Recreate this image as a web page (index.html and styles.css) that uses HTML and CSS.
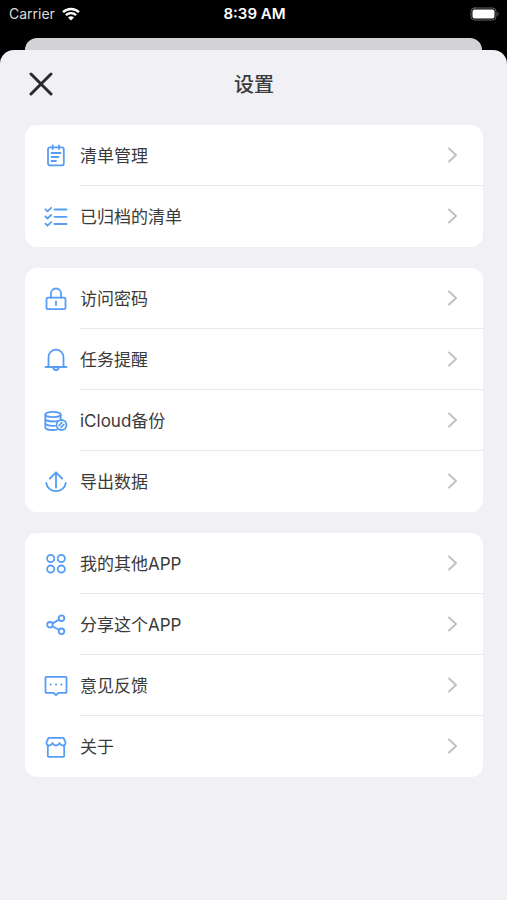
FILE: index.html
```html
<!DOCTYPE html>
<html lang="zh-CN">
<head>
    <meta charset="UTF-8">
    <meta name="viewport" content="width=device-width, initial-scale=1.0">
    <title>设置</title>
    <link rel="stylesheet" href="styles.css">
</head>
<body>
    <!-- 状态栏 -->
    <div class="status-bar">
        <div class="carrier">
            <span>Carrier</span>
            <svg class="wifi" viewBox="0 0 18 14" aria-hidden="true">
                <path d="M1 5.2a11.5 11.5 0 0 1 16 0M3.9 8.2a7.3 7.3 0 0 1 10.2 0"/>
                <path class="dot" d="M9 13.5L6 10.6a4.3 4.3 0 0 1 6 0z"/>
            </svg>
        </div>
        <span class="time">8:39 AM</span>
        <div class="battery-box">
            <svg class="battery" viewBox="0 0 30 15" aria-hidden="true">
                <rect class="shell" x="1" y="1" width="25" height="12" rx="3.5"/>
                <rect class="level" x="2.5" y="2.5" width="22" height="9" rx="2"/>
                <path class="tip" d="M27.5 5v4c1.600-.5 1.600-3.500 0-4z"/>
            </svg>
        </div>
    </div>

    <div class="back-sheet"></div>

    <main class="sheet">
        <header class="header">
            <button class="close" type="button" aria-label="关闭">
                <svg viewBox="0 0 24 24" aria-hidden="true"><path d="M2 2l20 20M22 2L2 22"/></svg>
            </button>
            <h1>设置</h1>
        </header>

        <!-- 清单 -->
        <nav class="card">
            <a class="row" href="#lists">
                <svg class="icon" viewBox="0 0 24 24" aria-hidden="true">
                    <rect x="4" y="3.4" width="15.8" height="18" rx="2"/>
                    <path d="M8.700 1.500v3.500M15 1.500v3.500M7.500 9h9M7.500 13h7M7.500 17h4.500"/>
                </svg>
                <span class="label">清单管理</span>
                <svg class="arrow" viewBox="0 0 10 16" aria-hidden="true"><path d="M1 1.500L8 8l-7 6.500"/></svg>
            </a>
            <a class="row" href="#archived">
                <svg class="icon" viewBox="0 0 24 24" aria-hidden="true">
                    <path d="M10.500 4.500h12M10.500 11.800h12M10.500 19h12M1.500 4.300l2 2 3.700-3.500M1.500 11.500l2 2L7.200 10M1.500 18.700l2 2 3.700-3.500"/>
                </svg>
                <span class="label">已归档的清单</span>
                <svg class="arrow" viewBox="0 0 10 16" aria-hidden="true"><path d="M1 1.500L8 8l-7 6.500"/></svg>
            </a>
        </nav>

        <!-- 数据与提醒 -->
        <nav class="card">
            <a class="row" href="#passcode">
                <svg class="icon" viewBox="0 0 24 24" aria-hidden="true">
                    <rect x="2.500" y="10.700" width="19" height="11.500" rx="1.500"/>
                    <path d="M7 10.700V6.500a5 5 0 0 1 10 0v4.200M12 14.500v3.500"/>
                </svg>
                <span class="label">访问密码</span>
                <svg class="arrow" viewBox="0 0 10 16" aria-hidden="true"><path d="M1 1.500L8 8l-7 6.500"/></svg>
            </a>
            <a class="row" href="#reminder">
                <svg class="icon" viewBox="0 0 24 24" aria-hidden="true">
                    <path d="M4.500 19V9.200a7.500 7.500 0 0 1 15 0V19M1.500 19h21M9.300 19.300a2.700 2.700 0 0 0 5.400 0"/>
                </svg>
                <span class="label">任务提醒</span>
                <svg class="arrow" viewBox="0 0 10 16" aria-hidden="true"><path d="M1 1.500L8 8l-7 6.500"/></svg>
            </a>
            <a class="row" href="#icloud">
                <svg class="icon" viewBox="0 0 24 24" aria-hidden="true">
                    <ellipse cx="9" cy="5.500" rx="7.700" ry="2.700"/>
                    <path d="M1.300 5.500v12.900c0 1.500 3.500 2.600 7.700 2.600 1.500 0 3-.2 4.200-.5M16.700 5.500v5M1.300 9.800c0 1.500 3.500 2.700 7.700 2.700 1.600 0 3.200-.2 4.400-.5M1.300 14.100c0 1.500 3.500 2.700 7.700 2.700h2"/>
                    <circle cx="17.500" cy="16" r="5"/>
                    <path d="M15.200 16.500l2.600-2.800M17.200 18.300l2.600-2.800"/>
                </svg>
                <span class="label">iCloud备份</span>
                <svg class="arrow" viewBox="0 0 10 16" aria-hidden="true"><path d="M1 1.500L8 8l-7 6.500"/></svg>
            </a>
            <a class="row" href="#export">
                <svg class="icon" viewBox="0 0 24 24" aria-hidden="true">
                    <path d="M12 17.500V2.300M5.800 8.500L12 2.300l6.200 6.200M2.200 13a9.900 9.500 0 0 0 19.600 0"/>
                </svg>
                <span class="label">导出数据</span>
                <svg class="arrow" viewBox="0 0 10 16" aria-hidden="true"><path d="M1 1.500L8 8l-7 6.500"/></svg>
            </a>
        </nav>

        <!-- 关于应用 -->
        <nav class="card">
            <a class="row" href="#apps">
                <svg class="icon" viewBox="0 0 24 24" aria-hidden="true">
                    <circle cx="6.700" cy="6.500" r="3.600"/>
                    <circle cx="17.300" cy="6.500" r="3.600"/>
                    <circle cx="6.700" cy="17.100" r="3.600"/>
                    <circle cx="17.300" cy="17.100" r="3.600"/>
                </svg>
                <span class="label">我的其他APP</span>
                <svg class="arrow" viewBox="0 0 10 16" aria-hidden="true"><path d="M1 1.500L8 8l-7 6.500"/></svg>
            </a>
            <a class="row" href="#share">
                <svg class="icon" viewBox="0 0 24 24" aria-hidden="true">
                    <circle cx="6" cy="11.800" r="2.800"/>
                    <circle cx="17.500" cy="5.200" r="2.800"/>
                    <circle cx="17.500" cy="18.300" r="2.800"/>
                    <path d="M8.500 10.400l6.600-3.800M8.500 13.200l6.600 3.800"/>
                </svg>
                <span class="label">分享这个APP</span>
                <svg class="arrow" viewBox="0 0 10 16" aria-hidden="true"><path d="M1 1.500L8 8l-7 6.500"/></svg>
            </a>
            <a class="row" href="#feedback">
                <svg class="icon" viewBox="0 0 24 24" aria-hidden="true">
                    <path d="M2.300 2.800h19.400a.8.800 0 0 1 .8.800V18a.8.800 0 0 1-.8.800h-7L12 21l-2.700-2.200h-7a.8.800 0 0 1-.8-.8V3.600a.8.800 0 0 1 .8-.8z"/>
                    <path class="dots" d="M6.500 10.500h.1M12 10.500h.1M17.400 10.500h.1"/>
                </svg>
                <span class="label">意见反馈</span>
                <svg class="arrow" viewBox="0 0 10 16" aria-hidden="true"><path d="M1 1.500L8 8l-7 6.500"/></svg>
            </a>
            <a class="row" href="#about">
                <svg class="icon" viewBox="0 0 24 24" aria-hidden="true">
                    <path d="M4.500 2.800h15l2 4.400c.3 2-1 3.300-2.600 3.300-1.500 0-2.700-.9-3.400-2.500-.7 1.600-1.900 2.500-3.500 2.500S9.200 9.600 8.500 8c-.7 1.600-1.900 2.500-3.400 2.500-1.600 0-2.900-1.300-2.600-3.300zM3.800 10.500v10.300c0 .6.400 1 1 1h14.400c.6 0 1-.4 1-1V10.500"/>
                </svg>
                <span class="label">关于</span>
                <svg class="arrow" viewBox="0 0 10 16" aria-hidden="true"><path d="M1 1.500L8 8l-7 6.500"/></svg>
            </a>
        </nav>
    </main>
</body>
</html>
```
FILE: styles.css
```css
* {
    box-sizing: border-box;
}
body {
    display: flex;
    flex-direction: column;
    min-height: 100vh;
    margin: 0;
    background-color: #000;
    color: #3a3a3a;
    font-family: Inter, "Noto Sans CJK SC", sans-serif;
}
svg {
    display: block;
    fill: none;
    stroke-linecap: round;
    stroke-linejoin: round;
}
/* 状态栏 */
.status-bar {
    display: grid;
    grid-template-columns: 1fr auto 1fr;
    align-items: center;
    height: 28px;
    margin-bottom: 10px;
    padding: 0 7px 0 9px;
    color: #fff;
    font-size: 14px;
    line-height: 20px;
}
.carrier {
    display: flex;
    align-items: center;
    gap: 7px;
    color: #ddd;
}
.wifi {
    width: 18px;
    height: 14px;
    stroke: #fff;
    stroke-width: 2.4;
    stroke-linecap: butt;
}
.wifi .dot {
    fill: #fff;
    stroke: none;
}
.time {
    font-size: 15px;
    font-weight: 600;
}
.battery-box {
    display: flex;
    justify-content: flex-end;
}
.battery {
    width: 30px;
    height: 15px;
}
.battery .shell {
    stroke: #666;
}
.battery .level {
    fill: #fff;
}
.battery .tip {
    fill: #666;
}
/* 设置面板 */
.back-sheet {
    height: 12px;
    margin: 0 25px;
    border-radius: 12px 12px 0 0;
    background-color: #d3d3d5;
}
.sheet {
    flex: 1;
    padding: 0 24px 24px 25px;
    border-radius: 14px 14px 0 0;
    background-color: #f0f0f5;
}
.header {
    display: grid;
    grid-template-columns: 32px 1fr 32px;
    align-items: center;
    height: 68px;
    margin-bottom: 7px;
}
.close {
    padding: 4px;
    border: none;
    background: none;
    cursor: pointer;
}
.close svg {
    width: 24px;
    height: 24px;
    stroke: #2a2a2e;
    stroke-width: 3;
}
h1 {
    margin: 0;
    padding-top: 2px;
    font-size: 20px;
    font-weight: 500;
    line-height: 28px;
    text-align: center;
}
.card {
    margin-bottom: 21px;
    border-radius: 12px;
    background-color: #fff;
    overflow: hidden;
}
.row {
    display: flex;
    align-items: center;
    height: 61px;
    padding-left: 19px;
    color: #3a3a3a;
    text-decoration: none;
}
.icon {
    width: 24px;
    height: 24px;
    margin-right: 12px;
    stroke: #559df5;
    stroke-width: 1.8;
}
.icon .dots {
    stroke-width: 2;
}
.label {
    flex: 1;
    align-self: stretch;
    padding-top: 1px;
    border-bottom: 1px solid #e9e9eb;
    font-size: 17px;
    line-height: 60px;
}
.arrow {
    box-sizing: content-box;
    width: 10px;
    height: 60px;
    padding-right: 25px;
    border-bottom: 1px solid #e9e9eb;
    stroke: #c2c2c4;
    stroke-width: 2;
}
.row:last-child .label,
.row:last-child .arrow {
    border-bottom-color: transparent;
}
```
